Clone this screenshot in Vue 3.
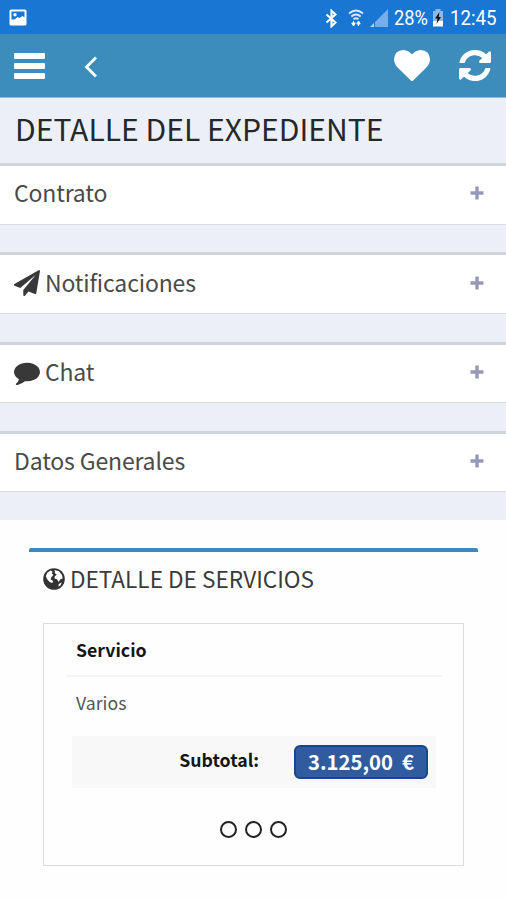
<template>
  <div class="screen">
    <div class="status-bar">
      <svg class="status-picture" viewBox="0 0 18 17">
        <rect x="0.5" y="0.5" width="17" height="16" rx="1.5" fill="#fff" />
        <path d="M2.500 2.500h13v6l-2-1.500-3 2-2-1-3 2.500h-3z" fill="#1976d2" />
        <circle cx="6" cy="5.800" r="1.700" fill="#fff" />
      </svg>
      <div class="status-right">
        <svg class="status-bluetooth" viewBox="0 0 13 19">
          <path d="M1.500 5.500l9 8-4 3.700V1.800l4 3.700-9 8" fill="none" stroke="#fff" stroke-width="2.100" />
        </svg>
        <svg class="status-wifi" viewBox="0 0 16 18">
          <g fill="none" stroke="#d8e8fa" stroke-width="1.900">
            <path d="M1 4.500q7-6 14 0" />
            <path d="M3.300 7.500q4.700-4 9.400 0" />
            <path d="M5.600 10.200q2.400-2 4.800 0" />
          </g>
          <path d="M5.500 12v4M3.800 14l1.700 3 1.700-3zM10.500 17v-4M8.800 15l1.700-3 1.700 3z" stroke="#fff" fill="#fff" />
        </svg>
        <svg class="status-signal" viewBox="0 0 18 18">
          <path d="M18 0v18H5V13z" fill="#75aee9" />
          <path d="M0 18l4-4v4z" fill="#b5d5f5" />
        </svg>
        <span class="status-percent">28%</span>
        <svg class="status-battery" viewBox="0 0 12 18">
          <path d="M3.500 0h5v2H11v10H1V2h2.500z" fill="#8bb9e8" />
          <path d="M1 12h10v5.500H1z" fill="#fff" />
          <path d="M7.500 3L3 9.500h2.500L4.500 15 9 8H6.700z" fill="#111" />
        </svg>
        <span class="status-time">12:45</span>
      </div>
    </div>

    <header class="navbar">
      <button class="btn-menu" type="button" @click="menuOpen = !menuOpen">
        <span></span><span></span><span></span>
      </button>
      <button class="btn-back" type="button">
        <svg viewBox="0 0 14 22"><path d="M12 1.500L2.500 11l9.500 9.500" fill="none" stroke="#fff" stroke-width="2.800" /></svg>
      </button>
      <div class="navbar-actions">
        <svg class="icon-heart" viewBox="0 128 1792 1536" preserveAspectRatio="none">
          <path :d="icons.heart" fill="#fff" />
        </svg>
        <svg class="icon-refresh" viewBox="128 128 1536 1536" preserveAspectRatio="none">
          <path :d="icons.refresh" fill="#fff" />
        </svg>
      </div>
    </header>

    <h1 class="page-title"><span>DETALLE DEL EXPEDIENTE</span></h1>

    <section v-for="box in boxes" :key="box.title" class="box">
      <div class="box-header">
        <svg v-if="box.icon" class="box-icon" viewBox="0 0 1792 1792">
          <path :d="icons[box.icon]" />
        </svg>
        <span class="box-title">{{ box.title }}</span>
        <svg class="box-plus" viewBox="0 0 14 14">
          <path d="M5.300 0.500h3.400v4.800h4.800v3.400H8.700v4.800H5.300V8.700H0.500V5.300h4.800z" />
        </svg>
      </div>
    </section>

    <main class="content">
      <div class="card">
        <h2 class="card-title">
          <svg class="icon-globe" viewBox="0 0 22 22">
            <circle cx="11" cy="11" r="10.800" fill="#333" />
            <path d="M4.300 4.800L7.500 2.600l2 .9-.6 2.300 1.600 1-2 2.200-1 2.300 2.600 1.600-.8 2.200-2.700-1.200-2.400-2.700-1.400-3z" fill="#fff" />
            <path d="M11.500 2l4.500 1.300 3 3.700.7 3.500-2.300.7-1.800 2.800-1.600-2.800-2.500-.6.300-2.400 2-1.400-1.800-1.500z" fill="#fff" />
            <path d="M18.800 14.200l-1.200 3-2.200 1.600.4-2.700z" fill="#fff" />
          </svg>
          <span>DETALLE DE SERVICIOS</span>
        </h2>

        <div class="service">
          <div class="service-head"><span>Servicio</span></div>
          <div class="service-name"><span>Varios</span></div>
          <div class="subtotal">
            <span class="subtotal-label">Subtotal:</span>
            <span class="subtotal-amount"><span>3.125,00&nbsp; €</span></span>
          </div>
          <div class="dots">
            <i v-for="n in 3" :key="n"></i>
          </div>
        </div>
      </div>
    </main>
  </div>
</template>

<script setup>
import { ref } from 'vue'

const menuOpen = ref(false)

const boxes = [
  { title: 'Contrato' },
  { title: 'Notificaciones', icon: 'plane' },
  { title: 'Chat', icon: 'comment' },
  { title: 'Datos Generales' },
]

const icons = {
  heart:
    'M896 1664q-26 0-44-18l-624-602q-10-8-27.500-26T145 952.500 77 855 23.500 734 0 596q0-220 127-344t351-124q62 0 126.500 21.500t120 58T820 276t76 68q36-36 76-68t95.500-68.500 120-58T1314 128q224 0 351 124t127 344q0 221-229 450l-623 600q-18 18-44 18z',
  refresh:
    'M1639 1056q0 5-1 7-64 268-268 434.500t-478 166.500q-146 0-282.500-55t-243.500-157l-129 129q-19 19-45 19t-45-19-19-45v-448q0-26 19-45t45-19h448q26 0 45 19t19 45-19 45l-137 137q71 66 161 102t187 36q134 0 250-65t186-179q11-17 53-117 8-23 30-23h192q13 0 22.500 9.500t9.500 22.500zm25-800v448q0 26-19 45t-45 19h-448q-26 0-45-19t-19-45 19-45l138-138q-148-137-349-137-134 0-250 65t-186 179q-11 17-53 117-8 23-30 23h-199q-13 0-22.500-9.500t-9.500-22.500v-7q65-268 270-434.500t480-166.500q146 0 284 55.500t245 156.500l130-129q19-19 45-19t45 19 19 45z',
  plane:
    'M1764 11q33 24 27 64l-256 1536q-5 29-32 45-14 8-31 8-11 0-24-5l-453-185-242 295q-18 23-49 23-13 0-22-4-19-7-30.500-23.500T640 1728v-349l864-1059-1069 925-395-162q-37-14-40-55-2-40 32-59L1696 9q15-9 32-9 20 0 36 11z',
  comment:
    'M1792 896q0 174-120 321.500t-326 233-450 85.500q-70 0-145-8-198 175-460 242-49 14-114 22-17 2-30.500-9t-17.500-29v-1q-3-4-.5-12t2-10 4.500-9.500l6-9 7-8.500 8-9q7-8 31-34.500t34.500-38 31-39.500 32.500-51 27-59 26-76q-157-89-247.500-220T0 896q0-130 71-248.500t191-204.500 286-136.500 348-50.500q244 0 450 85.500t326 233T1792 896z',
}
</script>

<style>
body {
  margin: 0;
  background: #fff;
}
</style>

<style scoped>
.screen {
  width: 506px;
  height: 900px;
  overflow: hidden;
  background: #fefefe;
  color: #333;
  font-family: 'Noto Sans CJK SC', 'Noto Sans', sans-serif;
  font-weight: 400;
}

svg {
  display: block;
  flex-shrink: 0;
}

.status-bar {
  display: flex;
  justify-content: space-between;
  height: 34px;
  box-sizing: border-box;
  padding: 0 9px;
  background: #1976d2;
  color: #fff;
}

.status-picture {
  width: 18px;
  height: 17px;
  margin-top: 9px;
}

.status-right {
  display: flex;
  align-items: center;
  height: 36px;
  font-family: Roboto, sans-serif;
  font-size: 21px;
  line-height: 36px;
}

.status-bluetooth {
  width: 13px;
  height: 19px;
  margin-right: 10px;
}

.status-wifi {
  width: 16px;
  height: 18px;
  margin-right: 6px;
}

.status-signal {
  width: 18px;
  height: 18px;
  margin-right: 6px;
}

.status-percent {
  width: 38px;
  transform: scaleX(0.87);
  transform-origin: left;
}

.status-battery {
  width: 12px;
  height: 18px;
  margin-right: 6px;
}

.status-time {
  width: 47px;
  transform: scaleX(0.89);
  transform-origin: left;
}

.navbar {
  display: flex;
  align-items: center;
  height: 64px;
  box-sizing: border-box;
  padding: 0 15px 0 14px;
  background: #3c8dbc;
  border-bottom: 1px solid #8dbbd8;
}

button {
  padding: 0;
  border: none;
  background: none;
  cursor: pointer;
}

.btn-menu {
  display: flex;
  flex-direction: column;
  gap: 4px;
  width: 31px;
}

.btn-menu span {
  height: 6px;
  border-radius: 1px;
  background: #fff;
}

.btn-back {
  margin-left: 39px;
}

.btn-back svg {
  width: 14px;
  height: 22px;
  margin-top: 2px;
}

.navbar-actions {
  display: flex;
  align-items: center;
  gap: 29px;
  margin-left: auto;
}

.icon-heart {
  width: 36px;
  height: 31px;
}

.icon-refresh {
  width: 32px;
  height: 31px;
}

.page-title {
  height: 65px;
  margin: 0;
  padding-left: 15px;
  box-sizing: border-box;
  background: #ecf0f6;
  color: #25282b;
  font-size: 30.100px;
  font-weight: 400;
  line-height: 61px;
  white-space: nowrap;
}

.box {
  height: 89.300px;
  background: #ecf0f6;
}

.box-header {
  display: flex;
  align-items: center;
  height: 61.500px;
  box-sizing: border-box;
  padding: 0 22px 3px 14px;
  border-top: 3px solid #d0d4dc;
  border-bottom: 1px solid #d9dce2;
  background: #fff;
}

.box-icon {
  width: 26px;
  height: 26px;
  margin-right: 5px;
  fill: #383838;
}

.box-title {
  padding-bottom: 1px;
  color: #4a4a4a;
  font-size: 23px;
  font-weight: 400;
  line-height: 53px;
  letter-spacing: -0.15px;
}

.box-plus {
  width: 14px;
  height: 14px;
  margin-left: auto;
  fill: #9699b5;
}

.content {
  padding: 28px 28px 0 29px;
}

.card {
  height: 360px;
  padding: 0 14px;
  border-top: 4px solid #3a8abb;
  border-radius: 2px;
  box-shadow: 0 1px 1px rgba(0, 0, 0, 0.03);
}

.card-title {
  display: flex;
  align-items: center;
  height: 71px;
  margin: 0;
  padding-bottom: 18px;
  box-sizing: border-box;
  color: #3a3a3a;
  font-size: 22.600px;
  font-weight: 400;
  line-height: 53px;
  white-space: nowrap;
}

.icon-globe {
  width: 22px;
  height: 22px;
  margin-right: 5px;
}

.service {
  height: 243px;
  box-sizing: border-box;
  border: 1.500px solid #dcdcdc;
}

.service-head {
  height: 53px;
  box-sizing: border-box;
  margin: 0 21px 0 22px;
  padding-left: 10px;
  border-bottom: 2px solid #f4f4f4;
  color: #151515;
  font-size: 17.700px;
  font-weight: 700;
  line-height: 51px;
}

.service-name {
  height: 59px;
  padding-left: 32px;
  color: #555;
  font-size: 17.700px;
  font-weight: 400;
  line-height: 51px;
}

.subtotal {
  display: flex;
  align-items: center;
  justify-content: flex-end;
  height: 52px;
  margin: 0 27px 0 28px;
  padding-right: 8px;
  box-sizing: border-box;
  background: #f8f8f8;
}

.subtotal-label {
  margin-right: 35px;
  padding-bottom: 7px;
  color: #151515;
  font-size: 17.700px;
  font-weight: 700;
}

.subtotal-amount {
  width: 134px;
  height: 34px;
  box-sizing: border-box;
  border: 2px solid #16468e;
  border-radius: 6px;
  background: #305b9f;
  color: #fff;
  font-size: 20.300px;
  font-weight: 700;
  line-height: 29px;
  text-align: center;
  white-space: nowrap;
}

.dots {
  display: flex;
  justify-content: center;
  gap: 8px;
  margin-top: 33px;
}

.dots i {
  width: 17px;
  height: 17px;
  box-sizing: border-box;
  border: 2px solid #222;
  border-radius: 50%;
}
</style>
